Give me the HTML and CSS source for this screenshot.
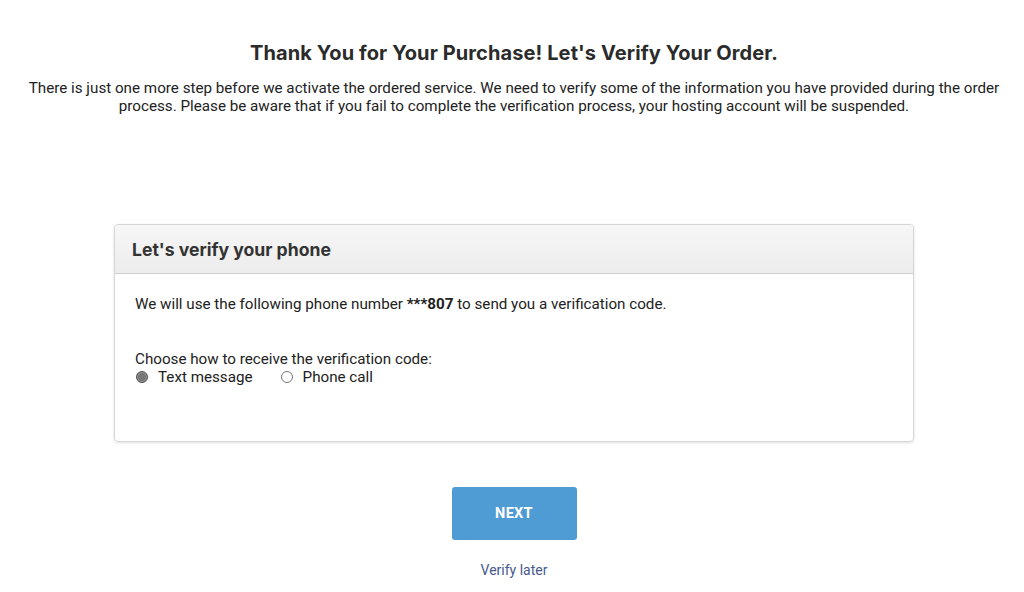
FILE: index.html
```html
<!DOCTYPE html>
<html>
<head>
<meta charset="utf-8">
<link rel="stylesheet" href="styles.css">
</head>
<body>
<main class="page">
  <h1 class="title">Thank You for Your Purchase! Let's Verify Your Order.</h1>
  <p class="intro">There is just one more step before we activate the ordered service. We need to verify some of the information you have provided during the order process. Please be aware that if you fail to complete the verification process, your hosting account will be suspended.</p>

  <section class="card">
    <header class="card-head">Let's verify your phone</header>
    <div class="card-body">
      <p class="line">We will use the following phone number <b>***807</b> to send you a verification code.</p>
      <p class="choose">Choose how to receive the verification code:</p>
      <div class="options">
        <label class="opt"><span class="radio checked"></span>Text message</label>
        <label class="opt"><span class="radio"></span>Phone call</label>
      </div>
    </div>
  </section>

  <button class="next">NEXT</button>
  <a class="later" href="#">Verify later</a>
</main>
</body>
</html>
```

FILE: styles.css
```css
* { box-sizing: border-box; }
html, body { margin: 0; padding: 0; background: #fff; }
body {
  font-family: Roboto, "Liberation Sans", Arial, sans-serif;
  color: #222;
}
.page {
  display: flex;
  flex-direction: column;
  align-items: center;
  padding-top: 40px;
  padding-left: 4px;
}
.title {
  margin: 0;
  font-family: Inter, "Open Sans", sans-serif;
  font-weight: 700;
  font-size: 20px;
  line-height: 26px;
  color: #2b2b2b;
  letter-spacing: 0.1px;
}
.intro {
  margin: 13px 0 0;
  width: 985px;
  text-align: center;
  font-size: 15.2px;
  line-height: 18px;
  color: #222;
}
.card {
  margin-top: 109px;
  width: 800px;
  border: 1px solid #d6d6d6;
  border-radius: 4px;
  box-shadow: 0 1px 3px rgba(0,0,0,0.12);
  overflow: hidden;
}
.card-head {
  height: 49px;
  display: flex;
  align-items: center;
  padding-left: 17px;
  background: linear-gradient(#f7f7f7, #ececec);
  border-bottom: 1px solid #cfcfcf;
  font-family: Inter, "Open Sans", sans-serif;
  font-weight: 700;
  font-size: 17.6px;
  color: #333;
}
.card-body {
  padding: 20px 20px 55px;
  font-size: 15.2px;
  color: #222;
}
.line { margin: 0; line-height: 20px; }
.choose { margin: 36px 0 0; line-height: 18px; }
.options {
  display: flex;
  gap: 27px;
  line-height: 18px;
}
.opt {
  display: flex;
  align-items: center;
  gap: 10px;
  font-size: 15.2px;
}
.radio {
  width: 12px;
  height: 12px;
  border-radius: 50%;
  border: 1px solid #777;
  background: #fff;
  margin-left: 1px;
}
.radio.checked {
  background: #777;
  border-color: #555;
  box-shadow: inset 0 0 0 1px #999;
}
.next {
  margin-top: 45px;
  width: 125px;
  height: 53px;
  border: none;
  border-radius: 3px;
  background: #4f9bd4;
  color: #fff;
  font-family: Roboto, "Liberation Sans", sans-serif;
  font-weight: 700;
  font-size: 14.5px;
  letter-spacing: 0.3px;
}
.later {
  margin-top: 22px;
  font-size: 14px;
  line-height: 16px;
  color: #46588e;
  text-decoration: none;
}
```
